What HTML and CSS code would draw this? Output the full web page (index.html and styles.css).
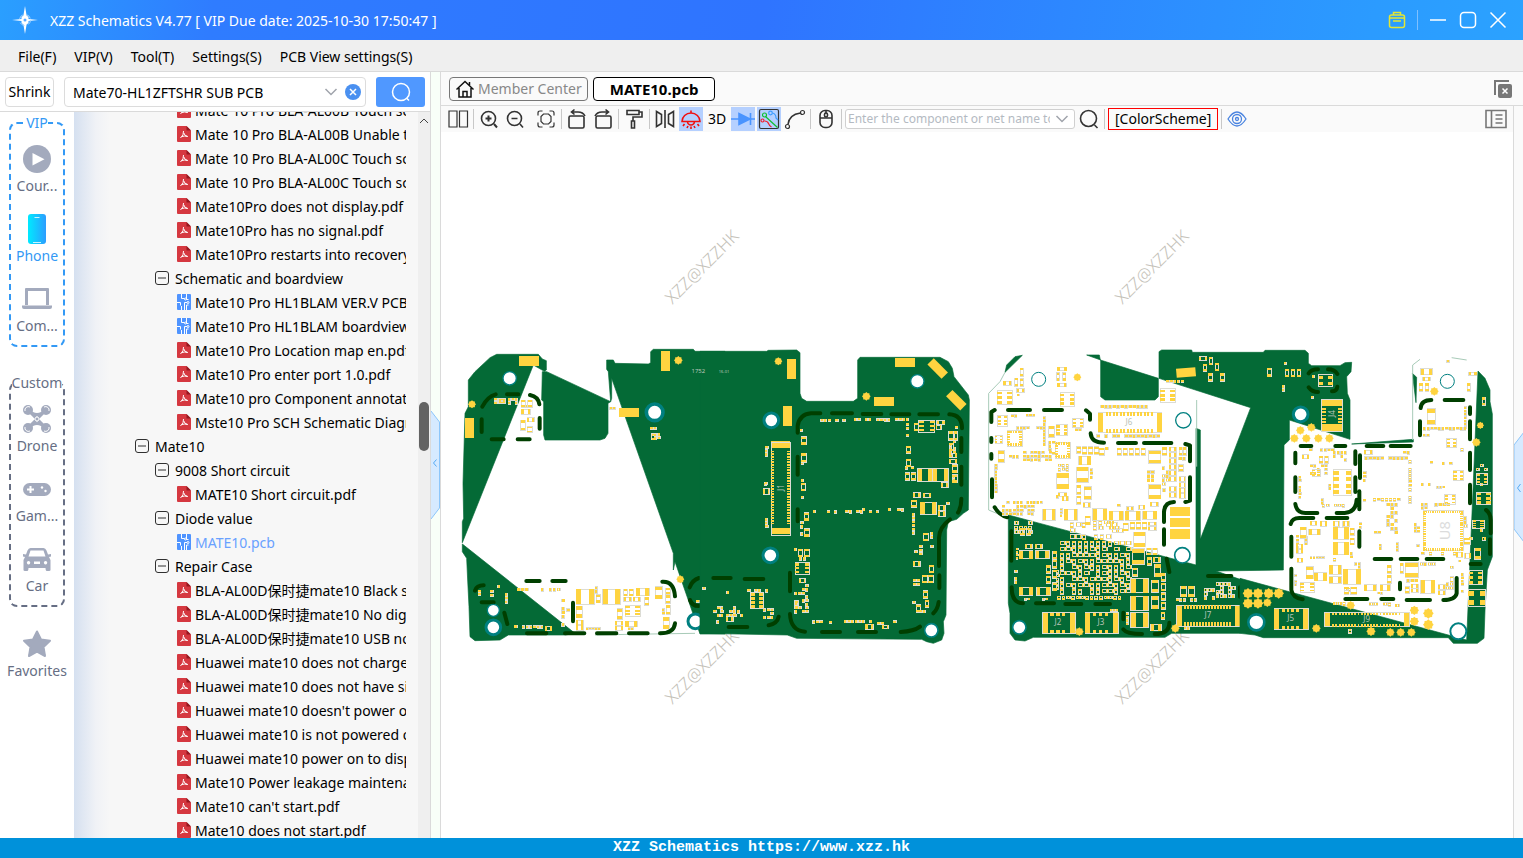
FILE: index.html
```html
<!DOCTYPE html>
<html lang="en">
<head>
    <meta charset="utf-8">
    <title>XZZ Schematics</title>
    <link rel="stylesheet" href="styles.css">
</head>
<body>
    <header class="titlebar">
        <svg class="logo" viewBox="0 0 28 28" aria-hidden="true">
            <path class="star" d="M14 0l1.600 9.500L17.500 11v2l9.500 1-9.500 1v2l-1.900 1.500L14 28l-1.600-9.500L10.500 17v-2L1 14l9.500-1v-2l1.900-1.500z"/>
            <circle class="ring" cx="14" cy="14" r="5.500"/>
            <circle class="core" cx="14" cy="14" r="1.500"/>
        </svg>
        <span class="app-name">XZZ Schematics V4.77 [ VIP Due date: 2025-10-30 17:50:47 ]</span>
        <div class="window-buttons">
            <button aria-label="Toolbox"><svg class="toolbox" viewBox="0 0 20 20"><rect x="2.500" y="5" width="15" height="12.500" rx="2"/><path d="M6.500 5V2.500h7V5M2.500 8h15M6 11h8"/></svg></button>
            <span class="divider"></span>
            <button aria-label="Minimize"><svg viewBox="0 0 20 20"><path d="M2 10h16"/></svg></button>
            <button aria-label="Maximize"><svg viewBox="0 0 20 20"><rect x="2.500" y="2.500" width="15" height="15" rx="3.500"/></svg></button>
            <button aria-label="Close"><svg viewBox="0 0 20 20"><path d="M2.500 2.500l15 15M17.500 2.500l-15 15"/></svg></button>
        </div>
    </header>

    <nav class="menubar">
        <button>File(F)</button>
        <button>VIP(V)</button>
        <button>Tool(T)</button>
        <button>Settings(S)</button>
        <button>PCB View settings(S)</button>
    </nav>

    <main class="workspace">
        <section class="left">
            <form class="search">
                <button type="button" class="shrink">Shrink</button>
                <div class="search-box">
                    <input type="text" aria-label="Search files" value="Mate70-HL1ZFTSHR SUB PCB">
                    <button type="button" aria-label="History"><svg class="chevron" viewBox="0 0 16 16"><path d="M2.500 5l5.500 5.500L13.500 5"/></svg></button>
                    <button type="button" aria-label="Clear"><svg class="clear" viewBox="0 0 16 16"><circle cx="8" cy="8" r="8"/><path d="M5 5l6 6M11 5l-6 6"/></svg></button>
                </div>
                <button type="button" class="go" aria-label="Search"><svg viewBox="0 0 24 24"><circle cx="12" cy="12" r="8.500"/><path d="M17.500 18l2.500 2.500"/></svg></button>
            </form>
            <div class="browser">
                <aside class="categories">
                    <fieldset class="group group-vip">
                        <legend>VIP</legend>
                        <button class="cat"><svg viewBox="0 0 30 30"><circle cx="15" cy="15" r="14"/><path class="hole" d="M10.500 9v12.500L22.500 15.200z"/></svg><span>Cour...</span></button>
                        <button class="cat active"><svg viewBox="0 0 30 30"><defs><linearGradient id="ph"><stop offset="0" stop-color="#00eaff"/><stop offset="1" stop-color="#2c9dff"/></linearGradient></defs><rect x="6" y="0" width="18" height="30" rx="3" fill="url(#ph)"/><path d="M12.500 3.500h5M11 28.500h8" stroke="#c9f5ff" stroke-width="1.200"/></svg><span>Phone</span></button>
                        <button class="cat"><svg viewBox="0 0 30 30"><path fill-rule="evenodd" d="M4 4h22q1 0 1 1v17H3V5q0-1 1-1zM6 7v14h18V7zM0 21.500h30V23q0 2-2 2H2q-2 0-2-2z"/></svg><span>Com...</span></button>
                    </fieldset>
                    <fieldset class="group">
                        <legend>Custom</legend>
                        <button class="cat"><svg viewBox="0 0 30 30"><circle cx="6" cy="6" r="5"/><circle cx="24" cy="6" r="5"/><circle cx="6" cy="24" r="5"/><circle cx="24" cy="24" r="5"/><path class="arm" d="M6 6q9 9 18 0M6 24q9-9 18 0M8 8l14 14M22 8L8 22"/><circle class="hub" cx="15" cy="15" r="2"/><path class="prop" d="M3 7a3.500 3.500 0 0 1 5-4M27 7a3.500 3.500 0 0 0-5-4M3 23a3.500 3.500 0 0 0 5 4M27 23a3.500 3.500 0 0 1-5 4"/></svg><span>Drone</span></button>
                        <button class="cat"><svg viewBox="0 0 30 30"><rect x="1" y="9" width="28" height="13" rx="6.500"/><path class="mark" d="M5 15.500h7M8.500 12v7"/><circle class="hole" cx="20" cy="13.500" r="1.200"/><circle class="hole" cx="23.500" cy="17" r="1.200"/></svg><span>Gam...</span></button>
                        <button class="cat"><svg viewBox="0 0 30 30"><path fill-rule="evenodd" d="M8.500 4h13q2 0 3 2.500l1.500 4 3-.5v2.500l-2 .5 1.500 3V26q0 1-1.500 1h-2.500q-1 0-1-3h-17q0 3-1 3H3q-1.500 0-1.500-1V16L3 13l-2-.5V10l3 .5 1.500-4Q6.500 4 8.500 4zM8.500 6.500L6.500 12.500h17l-2-6zM6.500 17a1.700 1.700 0 1 0 .1 0zM23.500 17a1.700 1.700 0 1 0 .1 0zM12 17.500v2.500h6v-2.500z"/></svg><span>Car</span></button>
                    </fieldset>
                    <button class="cat favorites"><svg viewBox="0 0 30 30"><path stroke="#a3aabd" stroke-width="2" stroke-linejoin="round" d="M15 2.500l4 8 9 1.300-6.500 6.200 1.500 9-8-4.300L7 27l1.500-9L2 11.800l9-1.300z"/></svg><span>Favorites</span></button>
                </aside>
                <div class="tree">
                    <ul id="files"></ul>
                </div>
                <div class="scrollbar">
                    <svg viewBox="0 0 12 12"><path d="M2 8l4-4 4 4"/></svg>
                    <span class="thumb"></span>
                </div>
            </div>
        </section>

        <div class="splitter">
            <svg viewBox="0 0 9 110"><path class="tab" d="M0 1l8.500 11v86L0 109"/><path class="arrow" d="M5.500 49.500L2.500 53l3 3.500"/></svg>
        </div>

        <section class="viewer">
            <div class="tabs">
                <a href="#home" class="tab-item"><svg viewBox="0 0 20 20"><path d="M1.500 10.500L10 2.500l8.500 8M4 9v9h12V9M8 18v-5.500h4V18M14.500 6V3"/></svg>Member Center</a>
                <a href="#board" class="tab-item current">MATE10.pcb</a>
                <button class="close-all" aria-label="Close all tabs"><svg viewBox="0 0 20 20"><path class="back" d="M2 16V2h14"/><rect x="5" y="5" width="14" height="14" rx="2"/><path class="x" d="M9.500 9.500l5 5M14.500 9.500l-5 5"/></svg></button>
            </div>
            <div class="toolbar">
                <button aria-label="Split view"><svg viewBox="0 0 22 22"><path d="M2 3h8v16H2zM12.500 3h8v16h-8z" class="thin"/></svg></button>
                <span class="sep"></span>
                <button aria-label="Zoom in"><svg viewBox="0 0 22 22"><circle cx="10.500" cy="10.500" r="7"/><path d="M16 16l3 3.500M7.500 10.500h6M10.500 7.500v6" class="bold"/></svg></button>
                <button aria-label="Zoom out"><svg viewBox="0 0 22 22"><circle cx="10.500" cy="10.500" r="7"/><path d="M16 16l3 3.500M7.500 10.500h6"/></svg></button>
                <span class="sep blank"></span>
                <button aria-label="Fit"><svg viewBox="0 0 22 22"><path class="thin" d="M3 7.500V5q0-2 2-2h2.500M14.500 3H17q2 0 2 2v2.500M19 14.500V17q0 2-2 2h-2.500M7.500 19H5q-2 0-2-2v-2.500"/><path class="thin" d="M8.500 6h5l2.500 2.500v5L13.500 16h-5L6 13.500v-5z"/></svg></button>
                <span class="sep"></span>
                <button aria-label="Rotate left"><svg viewBox="0 0 22 22"><rect x="3" y="8" width="15" height="12" rx="1.500"/><path d="M5.500 4H12q5 0 7 4M8.500 1.500L5.500 4l3 2.500"/></svg></button>
                <button aria-label="Rotate right"><svg viewBox="0 0 22 22"><rect x="4" y="8" width="15" height="12" rx="1.500"/><path d="M16.500 4H10q-5 0-7 4M13.500 1.500l3 2.500-3 2.500"/></svg></button>
                <span class="sep"></span>
                <button aria-label="Paint"><svg viewBox="0 0 22 22"><path d="M4 2.500h12v4H4zM16 4h3v5h-9v4M8.500 13h3v7h-3z"/></svg></button>
                <span class="sep"></span>
                <button aria-label="Mirror"><svg viewBox="0 0 22 22"><path d="M2.500 3.500l5 3v9l-5 3zM19.500 3.500l-5 3v9l5 3zM11 2v18"/></svg></button>
                <button class="on" aria-label="Lamp"><svg class="lamp" viewBox="0 0 22 22"><path d="M2 13.500a9 8.500 0 0 1 18 0zM11 5V2.500M7.500 13.500a3.500 3.500 0 0 0 7 0M4.500 16L3 18M17.500 16l1.500 2M8 18l-1 2M14 18l1 2M11 18.500V21"/></svg></button>
                <button class="text3d">3D</button>
                <button class="on" aria-label="Diode"><svg class="diode" viewBox="0 0 24 22"><path d="M0 11h24M19.500 5v12"/><path class="fill" d="M8 5.500v11l11-5.500z"/></svg></button>
                <button class="on" aria-label="Nets"><svg class="nets" viewBox="0 0 22 22"><rect x="1.500" y="1.500" width="19" height="19" rx="1.500"/><path class="green" d="M8 9l11.500 10.500"/><circle class="green" cx="6.500" cy="7" r="2"/><path class="red" d="M6.500 13q3 0 4 2.500t3 3.500"/><circle class="red" cx="4.500" cy="12.500" r="1.500"/><path class="blue" d="M14.500 5q3.500 1 3.500 5l2 2"/><circle class="blue" cx="12.500" cy="5" r="1.800"/></svg></button>
                <button aria-label="Curve"><svg viewBox="0 0 22 22"><path d="M4 16.500Q5 6.500 16.500 5"/><circle class="thin" cx="3.500" cy="18.500" r="2"/><circle class="thin" cx="18.500" cy="4.500" r="2"/></svg></button>
                <span class="sep"></span>
                <button aria-label="Mouse"><svg viewBox="0 0 22 22"><rect x="5" y="2.500" width="12" height="17" rx="5"/><path d="M5 10h12M11 2.500v3"/><rect x="9.500" y="5" width="3" height="4" rx="1.500"/></svg></button>
                <span class="sep"></span>
                <div class="net-box">
                    <input type="text" aria-label="Component or net name" placeholder="Enter the component or net name to search">
                    <svg class="chevron" viewBox="0 0 16 16"><path d="M2.500 5l5.500 5.500L13.500 5"/></svg>
                </div>
                <button aria-label="Find"><svg viewBox="0 0 22 22"><circle cx="10.500" cy="10.500" r="8"/><path d="M16.500 17l3 3"/></svg></button>
                <span class="sep"></span>
                <button class="scheme">[ColorScheme]</button>
                <span class="sep"></span>
                <button aria-label="Visibility"><svg class="eye" viewBox="0 0 22 22"><path d="M2 11q9-14 18 0-9 14-18 0z"/><circle cx="11" cy="11" r="4.500"/><circle cx="11" cy="11" r="1.500"/></svg></button>
                <button class="panel-toggle" aria-label="Side panel"><svg viewBox="0 0 22 22"><path d="M1 2.500h20v17H1zM6.500 2.500v17M10.500 7h7M10.500 11h7M10.500 15h7"/></svg></button>
            </div>
            <div class="stage">
                <svg class="board" viewBox="0 0 3216 2118" role="img" aria-label="MATE10 board view">
                    <g class="watermark">
                        <text transform="translate(786 408) rotate(-45)">XZZ@XZZHK</text>
                        <text transform="translate(2136 408) rotate(-45)">XZZ@XZZHK</text>
                        <text transform="translate(786 1608) rotate(-45)">XZZ@XZZHK</text>
                        <text transform="translate(2136 1608) rotate(-45)">XZZ@XZZHK</text>
                    </g>
                    <g id="a" transform="translate(42 624)">
                        <path class="pcb" d="M22 608V545l4-10-2-105 6-210 10-20v-80l20-25 45-42 20-10h125l12 14 12 5v28l-6 4-33-19zM262 95h13l192 90-8 5v90l-9 15-15 5H270l-4-15V185l-6-5zM455 60h20l5 10 100 2 7-4V35l8-7h120l5 6h90v848h-75l-75-217-5 25v-50L470 115v60l-3 10-7-90-5-7zM22 612l338 268-30 5H160l-25 15-75 2-15-12-3-90-4-80-3-65-13-20z"/>
                        <path class="rim" d="M420 885l100-2 200-3"/>
                    </g>
                    <g id="b" transform="translate(777 624)">
                        <path class="pcb" d="M0 34h200l5-3 85-1 10 8v122l5 15 15 9h140l13-9V60l7-8h240l25 13 12 20 5 25 43 55 3 15-3 330-15 10-20 18-25 7-5 25-2 255-8 20 2 35-7 20-25 10-20-5-15-7-375-3-28-10L0 880z"/>
                    </g>
                    <g id="c" transform="translate(1617 624)">
                        <path class="pcb" d="M75 97l5-22 25-25 22-4zM320 45h38l3 15 174 55v55l-10 10H375l-13-10V60zM537 115V35l8-5h90l2 7h213l5-6h120l10 9v30l10 7h85l15-9 20-1-2 28-13 15 2 50 8 20v118l-182-58v60l-16 15-2 375-202 3 72 25v162H575l-20 12H160l-25 11-30-3-15-20v-60l-5-30V525l75 20 488 130V265l13 5v328l151-395z"/>
                        <path class="rim" d="M75 97L60 125 26 160v350l60 25M650 180v200"/>
                    </g>
                    <g id="d" transform="translate(2397 624)">
                        <path class="pcb" d="M0 715l680 185 34-807 21 22 15 35v35l7 37v428l-15 40-7 120-3 85-20 15h-72l-15-17H70l-25-8-45-5zM517 100l13 12-2 76zM335 312l185-14v8z"/>
                        <path class="rim" d="M518 300V75l22-17M635 53l45 7"/>
                    </g>
                </svg>
            </div>
            <div class="rail">
                <svg viewBox="0 0 10 110"><path class="tab" d="M10 0L0 13v84l10 13"/><path class="arrow" d="M6.500 52l-3 4 3 4"/></svg>
            </div>
        </section>
    </main>

    <footer class="statusbar">XZZ Schematics https://www.xzz.hk</footer>
    <script src="app.js"></script>
</body>
</html>
```
FILE: styles.css
```css
* { box-sizing: border-box; }
body { margin: 0; height: 100vh; display: flex; flex-direction: column; overflow: hidden; font: 14px/20px "Noto Sans", "Noto Sans CJK SC", sans-serif; color: #000; background: #fff; }
button, input { font: inherit; color: inherit; border: 0; padding: 0; margin: 0; background: none; }
svg { fill: none; flex: none; }

.titlebar { height: 40px; flex: none; display: flex; align-items: center; padding: 0 15px 0 11px; color: #fff; background: linear-gradient(100deg, #2a9fff 0, #2f7cff 14%, #2f74ff 50%, #2b9bff 90%, #2ba2ff 100%); }
.logo { width: 28px; height: 28px; margin-right: 11px; }
.logo .star { fill: #fff; }
.logo .ring { stroke: #a9d6ff; stroke-dasharray: 5 4; }
.logo .core { fill: #58a8ff; }
.app-name { padding-top: 2px; }
.window-buttons { margin-left: auto; display: flex; align-items: center; gap: 10px; }
.window-buttons button, .window-buttons svg { display: block; width: 20px; height: 20px; }
.window-buttons svg { stroke: #fff; stroke-width: 1.500; }
.window-buttons .toolbox { stroke: #e3e635; }
.window-buttons .divider { width: 1px; height: 20px; background: #7fc0ff; }

.menubar { height: 32px; flex: none; display: flex; align-items: center; gap: 18px; padding: 2px 18px 0; background: #efefef; border-bottom: 1px solid #dadada; }

.workspace { flex: 1; min-height: 0; display: flex; }
.left { width: 431px; flex: none; display: flex; flex-direction: column; border-right: 1px solid #dadada; }
.search { height: 40px; flex: none; display: flex; align-items: center; padding: 0 5px; border-bottom: 1px solid #dadada; }
.shrink { width: 49px; height: 30px; padding-top: 1px; border: 1px solid #dcdcdc; border-radius: 4px; }
.search-box { flex: 1; height: 30px; margin: 0 10px; display: flex; align-items: center; gap: 6px; padding: 0 4px 0 8px; border: 1px solid #dcdcdc; border-radius: 4px; }
.search-box input { flex: 1; min-width: 0; padding-top: 2px; }
.search-box svg { display: block; width: 16px; height: 16px; }
.chevron { stroke: #a0a4ac; stroke-width: 1.500; }
.clear circle { fill: #4a90f0; }
.clear path { stroke: #fff; stroke-width: 1.500; }
.go { width: 49px; height: 30px; border-radius: 3px; background: #5098ff; }
.go svg { width: 24px; height: 24px; display: block; margin: auto; stroke: #fff; stroke-width: 1.500; }

.browser { flex: 1; min-height: 0; display: flex; }
.categories { width: 74px; flex: none; display: flex; flex-direction: column; align-items: center; padding-top: 1px; color: #666e84; overflow: hidden; }
.group { width: 56px; min-width: 0; margin: 0 0 26px; padding: 7px 0 9px; display: flex; flex-direction: column; align-items: center; gap: 14px; border: 2px dashed #666e84; border-radius: 8px; }
.group legend { padding: 0; margin: 0 auto; line-height: 20px; }
.group-vip { border-color: #3399f5; }
.group-vip legend, .cat.active { color: #3399f5; }
.cat { display: flex; flex-direction: column; align-items: center; }
.cat svg { width: 30px; height: 30px; margin: 4px 0 2px; fill: #a3aabd; }
.cat .hole { fill: #fff; }
.cat .mark { stroke: #fff; stroke-width: 2; }
.cat .arm { stroke: #a3aabd; stroke-width: 3; fill: none; }
.cat .hub, .cat .prop { stroke: #fff; fill: none; }
.favorites { margin-top: -8px; }

.tree { flex: 1; min-width: 0; overflow: hidden; padding-right: 12px; background: linear-gradient(90deg, #d5e0f0 0, #f0f2f6 22px, #f7f7f7 36px); }
.tree ul { list-style: none; margin: -14px 0 0; padding: 0; overflow: hidden; }
.tree li { height: 24px; display: flex; align-items: center; gap: 3px; white-space: nowrap; }
.tree li svg { width: 16px; height: 16px; }
.tree li span { padding-top: 2px; }
.tree .level1 { padding-left: 60px; }
.tree .level2 { padding-left: 80px; }
.tree .level3 { padding-left: 102px; }
.tree .level1, .tree .level2 { gap: 5px; }
.tree .selected { color: #69a1ff; }
.minus { stroke: #303030; }
.pdf .page { fill: #d53840; }
.pdf .fold { fill: #951820; }
.pdf .sign { stroke: #fff; }
.pcbfile .page { fill: #4f94ff; }
.pcbfile .sign { stroke: #fff; }

.scrollbar { width: 12px; flex: none; background: #efefef; position: relative; }
.scrollbar svg { display: block; width: 12px; height: 12px; margin-top: 3px; stroke: #444; }
.thumb { position: absolute; left: 1px; right: 1px; top: 40%; height: 49px; border-radius: 5px; background: #636363; }

.splitter { width: 9px; flex: none; display: flex; align-items: center; padding-top: 20px; background: #f8fff8; }
.splitter svg { width: 9px; height: 110px; }
.tab { fill: #d6eaff; stroke: #8cc6fa; }
.arrow { stroke: #55aaf5; }

.viewer { flex: 1; min-width: 0; display: grid; grid-template: 34px 26px 1fr / 1fr 10px; border-left: 1px solid #dadada; }
.tabs { grid-column: 1 / 3; display: flex; align-items: center; gap: 5px; padding: 0 10px 0 8px; background: #fafafa; border-bottom: 1px solid #dadada; }
.tab-item { height: 24px; display: flex; align-items: center; gap: 3px; padding: 0 5px; border: 1px solid #777; border-radius: 4px; color: #888; text-decoration: none; }
.tab-item svg { width: 20px; height: 20px; stroke: #111; stroke-width: 1.500; }
.tab-item.current { padding: 0 16px; border-color: #000; color: #000; font-size: 15px; font-weight: bold; background: #fff; }
.close-all { margin-left: auto; }
.close-all svg { display: block; width: 20px; height: 20px; }
.close-all .back { stroke: #777; stroke-width: 2; }
.close-all rect { fill: #777; }
.close-all .x { stroke: #fff; stroke-width: 1.500; }

.toolbar { display: flex; align-items: center; gap: 2px; padding: 0 5px; background: #fafafa; min-width: 0; }
.toolbar button { min-width: 24px; height: 24px; display: flex; align-items: center; justify-content: center; }
.toolbar button svg { width: 22px; height: 22px; stroke: #333; stroke-width: 1.600; }
.toolbar .sep { width: 1px; height: 20px; margin: 0 1px; background: #c8c8c8; }
.toolbar .blank { background: none; }
.toolbar .on { background: #b5d0ff; }
.toolbar .thin { stroke-width: 1.200; }
.toolbar .bold { stroke-width: 2; }
.toolbar button .lamp { stroke: #f01010; }
.toolbar button .diode { width: 24px; stroke: #4a94ff; }
.diode .fill { fill: #4a94ff; }
.toolbar button .nets { stroke-width: 1.200; }
.nets .green { stroke: #10c030; }
.nets .red { stroke: #f02030; }
.nets .blue { stroke: #3c9cff; }
.toolbar button .eye { stroke: #4a84e0; stroke-width: 1.300; }
.net-box { width: 230px; height: 20px; display: flex; align-items: center; padding: 0 4px 0 2px; border: 1px solid #d0d0d0; border-radius: 3px; background: #fff; }
.net-box input { flex: 1; min-width: 0; margin-right: 4px; font-size: 12px; }
.net-box input::placeholder { color: #b4bac2; }
.net-box .chevron { width: 16px; height: 16px; }
.toolbar .scheme { height: 22px; padding: 0 6px; border: 1px solid #f00; }
.toolbar .panel-toggle { margin-left: auto; }
.toolbar button.panel-toggle svg { stroke: #777; }

.stage { grid-row: 3; min-height: 0; background: #fff; }
.board { display: block; width: 100%; height: 100%; }
.rail { grid-row: 2 / 4; grid-column: 2; display: flex; align-items: center; padding-top: 30px; border-left: 1px solid #dadada; background: #fafafa; }
.rail svg { width: 10px; height: 110px; }

.watermark text { font-size: 51px; font-weight: 300; fill: #c4c1b8; text-anchor: middle; dominant-baseline: middle; }
.pcb { fill: #046a36; stroke: #046a36; stroke-width: 2; }
.rim { stroke: #a8cbb8; stroke-width: 3; }
.pad { fill: #ffd440; }
.outline { fill: none; stroke: #dcdcd4; stroke-width: 3; }
.shield { stroke: #003f00; stroke-width: 12; stroke-linecap: round; stroke-linejoin: round; }
.drill { fill: #fff; stroke: #008080; }
.ref { font-size: 24px; fill: #b8c4b8; text-anchor: middle; }
.ref.large { font-size: 44px; fill: #dcdcdc; }
.ref.small { font-size: 18px; }
.ref.tiny { font-size: 12px; }

.statusbar { height: 20px; flex: none; background: #0091da; color: #fff; text-align: center; font: bold 15px/20px "Liberation Mono", monospace; }
```
FILE: app.js
```js
// file tree: [level, type, name]
const files = [
    [3, 'pdf', 'Mate 10 Pro BLA-AL00B Touch screen.pdf'],
    [3, 'pdf', 'Mate 10 Pro BLA-AL00B Unable to start.pdf'],
    [3, 'pdf', 'Mate 10 Pro BLA-AL00C Touch screen.pdf'],
    [3, 'pdf', 'Mate 10 Pro BLA-AL00C Touch screen 2.pdf'],
    [3, 'pdf', 'Mate10Pro does not display.pdf'],
    [3, 'pdf', 'Mate10Pro has no signal.pdf'],
    [3, 'pdf', 'Mate10Pro restarts into recovery.pdf'],
    [2, 'dir', 'Schematic and boardview'],
    [3, 'pcb', 'Mate10 Pro HL1BLAM VER.V PCB.pcb'],
    [3, 'pcb', 'Mate10 Pro HL1BLAM boardview.pcb'],
    [3, 'pdf', 'Mate10 Pro Location map en.pdf'],
    [3, 'pdf', 'Mate10 Pro enter port 1.0.pdf'],
    [3, 'pdf', 'Mate10 pro Component annotation.pdf'],
    [3, 'pdf', 'Mste10 Pro SCH Schematic Diagram.pdf'],
    [1, 'dir', 'Mate10'],
    [2, 'dir', '9008 Short circuit'],
    [3, 'pdf', 'MATE10 Short circuit.pdf'],
    [2, 'dir', 'Diode value'],
    [3, 'pcb', 'MATE10.pcb'],
    [2, 'dir', 'Repair Case'],
    [3, 'pdf', 'BLA-AL00D保时捷mate10 Black screen.pdf'],
    [3, 'pdf', 'BLA-AL00D保时捷mate10 No digits.pdf'],
    [3, 'pdf', 'BLA-AL00D保时捷mate10 USB no.pdf'],
    [3, 'pdf', 'Huawei mate10 does not charge.pdf'],
    [3, 'pdf', 'Huawei mate10 does not have signal.pdf'],
    [3, 'pdf', "Huawei mate10 doesn't power on.pdf"],
    [3, 'pdf', 'Huawei mate10 is not powered on.pdf'],
    [3, 'pdf', 'Huawei mate10 power on to display.pdf'],
    [3, 'pdf', 'Mate10 Power leakage maintenance.pdf'],
    [3, 'pdf', "Mate10 can't start.pdf"],
    [3, 'pdf', 'Mate10 does not start.pdf']
];

const icons = {
    dir: '<svg class="minus" viewBox="0 0 16 16"><rect x="1.5" y="1.5" width="13" height="13" rx="2.5"/><path d="M4 8h8"/></svg>',
    pdf: '<svg class="pdf" viewBox="0 0 16 16"><path class="page" d="M2 0h8.500L15 4.500V15q0 1-1 1H2q-1 0-1-1V1q0-1 1-1z"/><path class="fold" d="M10.500 0v4.500H15z"/><path class="sign" d="M7.500 5q.5 4-3 7M7.800 7q.7 3 4 3.500M6 10.500q2.500-1 5.500 0"/></svg>',
    pcb: '<svg class="pcbfile" viewBox="0 0 16 16"><rect class="page" x="1" width="14" height="16" rx="1"/><path class="sign" d="M5.500 0v4.500h3M10.500 0v5.500h2M1 8.500h3.500v3M5.500 16v-4M8.500 16V8.500h2.500M10.500 16v-5h2"/><circle class="sign" cx="9.500" cy="5" r="1"/><circle class="sign" cx="12" cy="8.500" r="1"/></svg>'
};

document.getElementById('files').innerHTML = files.map(([level, type, name]) =>
    `<li class="level${level}${name === 'MATE10.pcb' ? ' selected' : ''}">${icons[type]}<span>${name}</span></li>`
).join('');

// board parts, grouped by board section
// pads: x y w h | chips: x y w h | dots: x y r | drills: x y r ring
// shield: path data | fields: x y w h cell fill | ics: x y w h pins | refs: x y text
const sections = {
    a: {
        pads: '192 48 60 30,29 234 28 60,618 33 27 60,492 204 60 27',
        dots: '51 193 12,670 61 13,676 718 12',
        drills: '164 115 20 4,599 217 25 11,115 811 18 4,115 862 22 9,721 844 22 9',
        shield: 'M82 200q15-30 40-37M156 163h34M225 165q25 5 28 28M80 238v38M254 234v32M110 298h36M188 298h36M60 752q5-16 26-16M80 787h36M148 818l9 34M214 723h40M292 723h40M354 788v56M622 725q35-2 38 44M660 850q-3 30-45 30M216 880h58M330 880h58M426 880h58M522 880h56M704 742q8-22 28-28M772 714h40M705 780q6 18 26 18',
        chips: '131 176 20 14,198 208 28 14,197 241 14 30,198 180 12 22,218 181 14 20,217 233 20 12,217 260 14 16,364 748 54 44,443 748 53 44,544 745 38 22,601 740 20 36,364 799 18 34,364 840 20 14,364 856 20 14,486 806 16 32,481 844 22 12,481 858 22 12,511 844 36 16,625 832 17 34,423 764 12 24,506 747 11 20,523 747 11 20,506 772 22 12,534 772 22 12,569 772 12 24,632 744 14 18,632 766 14 24,633 796 12 26,270 858 20 14,590 281 14 18',
        ics: '511 796 44 32 3',
        fields: '118 175 30 16 10 .9,160 175 28 16 10 .9,187 745 36 16 12 .9,246 745 68 16 12 .6,320 778 16 86 12 .7,335 806 12 24 12 .9,202 857 66 14 11 1,178 856 12 12 12 1,70 750 10 24 10 .9,106 740 12 32 11 .9,150 760 16 36 11 .9,128 736 10 10 10 1,394 863 84 8 9 .6,511 863 26 8 9 .9,421 740 14 22 11 .8,576 262 32 12 10 .6,588 280 28 18 10 .9,464 202 16 14 10 .9,742 740 12 16 12 1,724 780 14 12 12 1,774 796 34 50 12 .8,622 796 10 26 10 .8,214 196 20 8 9 .9'
    },
    b: {
        pads: '261 57 27 60,249 198 27 60,585 54 60 27,522 171 60 27,214 304 57 20,214 564 57 18',
        tilted: '683 72 60 27 45,739 167 60 27 45',
        dots: '235 64 12,499 169 13',
        drills: '214 241 22 9,211 646 22 9,652 124 20 4,694 871 20 5',
        shield: 'M293 278v-20q5-35 40-38h28M396 220h60M488 222h56M574 223h54M658 223h56M748 223q38 2 38 42M784 294v42M784 380v54M784 476q0 26-10 42M750 538q-33 25-33 55v85M718 706v38M716 786q-3 22-16 34M293 350v54M293 508v36M270 698v56M270 822q2 50 45 53M366 876h54M474 876h54M602 876q40-2 58-16M40 714h52M134 717h56M86 861h56M206 856q26-5 30-26',
        chips: '304 290 15 24,304 340 15 26,303 430 13 22,313 518 13 24,313 566 15 24,294 628 12 22,313 628 15 22,298 716 18 12,618 318 14 22,618 358 14 22,616 398 12 22,634 398 13 22,653 386 44 38,699 386 46 38,724 428 20 14,757 374 15 24,757 404 14 24,748 340 22 12,748 358 22 12,746 274 13 26,762 274 10 26,748 310 12 22,640 458 20 14,670 460 22 12,634 480 16 22,661 487 48 36,715 496 20 14,715 514 20 14,670 580 14 22,640 664 20 14,687 676 14 22,667 706 14 22,685 706 14 22,670 752 13 22,649 794 13 22,676 780 10 22,496 852 24 16,547 856 18 10,710 242 24 10,708 256 16 12,642 250 12 22,79 830 20 14,284 782 10 24,190 446 18 16',
        ics: '656 240 48 36 3,285 668 42 34 3,152 757 38 48 4',
        fields: '362 237 74 8 11 .8,462 234 60 10 11 .9,530 236 50 10 11 .9,586 234 50 12 11 .9,618 250 12 40 11 .9,300 268 12 12 10 1,303 366 12 8 10 1,303 418 14 8 10 1,303 468 14 8 10 1,340 510 16 8 11 1,382 512 26 8 10 .8,436 511 52 8 11 .9,488 504 14 16 11 .9,508 512 34 8 10 .8,564 504 14 16 11 .9,592 506 28 10 11 .9,302 545 14 50 11 .8,282 625 10 14 10 1,298 652 28 10 11 .9,284 734 42 92 11 .72,338 842 32 12 11 .9,376 844 18 16 11 .8,432 840 90 8 11 .9,532 846 24 8 11 .8,580 842 12 8 11 1,636 520 12 72 11 .8,692 576 14 28 11 .9,658 616 16 34 11 .8,692 616 10 12 10 1,644 632 10 10 10 1,640 718 26 28 11 .8,638 784 12 30 11 .8,658 810 22 14 11 .8,756 384 14 56 11 .3,748 300 24 70 11 .5,740 486 10 18 10 .9,766 258 12 12 10 1,634 380 12 10 10 1,616 380 12 10 10 1,196 318 14 34 11 .9,192 428 14 10 10 .8,196 534 12 36 11 .9,196 426 10 12 10 1,142 748 66 8 11 .8,40 800 32 36 11 .7,78 800 60 36 11 .8,190 806 30 32 11 .7,80 754 10 10 10 1,8 742 10 14 10 1,50 842 12 8 10 1'
    },
    c: {
        pads: '570 501 60 27,570 534 60 27,570 567 60 29',
        tilted: '589 84 58 27 -5',
        dots: '292 112 12,298 875 13,586 865 13,805 760 16,834 760 16,805 790 16,834 790 16',
        drills: '176 118 21 3,610 241 23 4,607 646 23 5,118 862 20 5,828 847 24 8',
        shield: 'M34 246v-30l10-6M84 210h66M192 210h54M318 211l12 10v18M332 280q2 28 40 28M414 309h54M492 309h82M616 312l14 4v48M630 412v70l-14 4M582 486q-28 0-30 30v30M552 568v46M34 294v12M34 342v14M36 418v54M44 502q14 24 38 30M94 574v88M95 742q0 48 34 48M168 790h54M256 792h48M346 792h44M560 656l8 40M430 818v20M430 868q10 14 56 14M524 882q44 0 44-34M684 708h70M780 742v28',
        chips: '120 84 10 24,230 98 8 24,248 98 9 24,232 82 28 10,232 130 26 10,70 124 24 12,104 114 9 24,120 116 10 22,110 146 22 10,296 348 36 26,290 382 34 44,230 400 36 46,312 440 22 38,290 436 12 26,290 468 12 24,188 508 38 32,252 508 40 32,310 488 20 14,338 506 42 34,388 514 42 26,436 514 44 26,488 514 42 24,506 332 36 38,506 434 36 42,316 528 14 26,206 258 16 34,55 332 18 34,412 324 12 22,430 324 12 22,448 324 12 22,466 324 12 22,484 324 12 22,306 320 14 22,324 320 14 22,342 320 14 22,358 324 14 22,290 320 12 20,546 322 14 24,568 322 20 12,568 338 20 14,568 356 20 14,568 374 20 14,568 392 20 14,568 410 20 14,568 440 20 14,568 458 20 14,598 322 8 24,610 322 8 24,596 374 14 20,598 410 18 14,598 428 18 14,598 444 18 14,598 460 18 14,461 576 34 44,456 626 36 46,452 716 52 42,452 768 52 42,452 818 52 44,515 720 20 36,515 768 20 38,524 672 18 38,512 852 32 20,458 684 14 24,118 632 40 24,167 632 40 22,118 742 40 24,170 742 40 24,198 676 12 24,198 708 12 22,218 634 12 24,218 660 12 24,218 690 12 24,218 728 12 24,120 564 14 22,140 564 12 22,136 612 20 12,166 612 20 12,234 458 26 10,246 468 18 14,658 50 22 10,688 52 8 22,670 72 10 22,706 70 10 22,684 100 13 24,720 100 13 24,602 738 16 32,624 738 18 32,430 550 14 22,450 546 14 22,468 546 14 22,486 546 14 22,504 546 24 10,504 560 24 10,500 624 14 20,518 624 14 20,544 700 12 24,544 730 12 22,544 758 12 22,544 786 12 22,544 816 10 22,502 652 12 24,520 652 20 14,510 486 24 12,476 496 18 12,440 500 20 10',
        ics: '52 152 44 42 3,240 158 42 40 3,541 146 44 40 3,53 226 28 32 3,278 234 32 28 3,228 254 34 32 3,46 286 20 24 3,82 272 44 46 6,226 306 44 48 6',
        plugs: '355 216 190 62 14,590 795 190 64 16,188 818 98 62 3,316 818 98 62 3',
        refs: '447 256 J6,684 834 J7,234 856 J2,363 856 J3',
        fields: '84 224 30 14 10 .6,138 222 30 12 10 .7,190 230 14 90 10 .8,100 260 90 10 10 .7,130 334 90 34 11 .85,76 346 50 16 11 .8,44 372 14 110 10 .8,80 484 106 12 10 .8,66 496 96 30 11 .75,286 266 28 12 10 .6,206 304 26 50 11 .7,350 196 160 16 12 .8,350 284 196 14 12 .85,376 322 40 20 12 .5,502 392 30 34 12 .8,546 380 20 60 12 .6,548 446 14 18 12 1,234 372 32 24 12 .8,228 466 16 16 12 1,104 544 60 40 14 .6,104 690 10 50 11 .8,134 774 76 8 9 .6,240 604 210 170 18 .93,270 548 160 60 18 .6,340 542 84 40 16 .9,232 768 200 14 14 1,228 690 16 60 12 .9,548 120 66 14 11 .7,588 776 66 10 11 .7,672 746 50 36 12 .7,708 728 60 50 12 .7,438 818 10 44 10 .8,390 808 26 8 9 .9,612 862 20 12 10 1,400 492 30 14 12 .8,330 386 12 40 11 .8,52 200 14 14 10 0,240 506 8 30 9 .9,108 624 8 34 9 .9,596 352 24 14 12 .9,112 162 8 14 9 1'
    },
    d: {
        pads: '244 179 62 18,244 252 62 20',
        dots: '181 271 13,214 262 13,163 295 13,199 295 13,235 295 13,268 295 13,583 154 13,721 256 11,709 307 13,24 760 16,54 760 16,86 760 16,116 760 16,24 790 16,54 790 16,82 788 13,229 865 13,332 796 13,393 874 14,451 877 13,482 877 13,514 877 13,523 811 14,565 820 16,523 844 14,565 854 16',
        drills: '182 223 22 9,622 124 21 3,655 874 24 6,49 847 24 8',
        shield: 'M206 100q8-12 28-12M264 88q20 0 28 14M206 142q10 14 28 14M276 154q14 0 16-14M182 318h32M286 318h30M380 318h50M452 318h60M166 338v32M166 412v44M166 492q4 27 30 27h36M290 519h24q34-2 36-40M346 334v38M346 412v44M360 346v68M358 454v54M152 552q4-18 26-18h42M260 534h62M154 590v60M154 686v64q4 24 34 28M358 574v46M404 657h50M482 657h50M560 657h50M316 777h66M424 777h36M500 780h70M610 780q36 0 40-20v-46M480 728v20M542 204q2-24 32-24M614 180h56M540 244v42M690 202v20M690 244v54M690 338v52M690 434v56M738 510q14 10 14 30v40M750 598v44M692 672h30',
        chips: '82 84 12 26,136 88 10 22,154 88 10 22,172 88 10 22,542 86 34 18,548 112 22 10,538 130 10 24,556 130 10 24,686 97 24 9,682 130 9 24,726 172 10 24,562 206 24 46,280 562 46 36,280 606 46 38,310 688 52 44,222 698 38 24,198 680 22 36,180 562 18 32,206 568 34 16,268 676 36 26,268 710 36 20,210 544 20 12,240 544 20 14,280 544 18 14,308 544 20 14,330 564 12 22,330 594 12 20,372 734 36 18,420 734 30 18,442 676 12 24,442 706 12 24,312 742 14 20,332 742 18 20,496 668 38 44,542 720 42 40,595 734 20 14,595 752 20 12,514 732 20 12,514 746 20 10,704 624 18 34,672 594 18 18,648 636 20 16,674 640 18 14,372 330 24 12,186 344 20 12,238 348 10 22,254 348 10 22,168 612 20 14,168 628 20 12,172 654 16 12,496 740 12 20,480 670 10 30,630 710 10 16',
        ics: '236 103 42 36 2,280 388 54 78 4,620 294 28 28 3,640 392 30 30 3,614 464 32 28 3,216 388 24 20 3,180 728 42 28 3,710 400 32 32 3,710 456 42 38 3,698 540 34 26 4,688 692 38 42 3,684 748 52 52 2,549 512 120 120 18',
        plugs: '254 818 254 42 22,103 806 102 62 4',
        refs: '152 844 J5,380 846 J9',
        fields: '208 326 80 14 11 .7,280 334 48 30 11 .7,176 408 14 66 10 .8,210 374 60 34 11 .6,266 432 10 24 10 1,244 476 10 24 10 1,246 492 74 12 12 .8,180 488 14 16 11 .9,374 350 128 14 12 .9,370 362 10 80 11 .8,468 334 40 16 11 .7,506 360 16 130 12 .8,400 474 90 12 12 .8,440 490 34 96 12 .6,370 574 60 12 11 .8,370 478 14 12 10 1,418 612 10 24 10 1,468 608 10 34 10 .9,550 262 128 16 11 .9,550 282 30 10 10 .7,672 200 10 66 10 .9,548 364 54 12 11 .6,606 366 50 10 11 .5,560 330 20 14 11 .6,544 430 26 8 10 .7,590 438 24 6 9 .8,662 324 16 14 12 .8,544 490 20 16 10 .9,584 490 50 18 12 .9,522 550 16 34 10 .7,530 604 14 24 10 .7,544 636 110 10 12 .7,168 586 10 60 11 .7,194 588 10 34 10 .7,210 650 60 8 9 .8,280 654 24 14 12 .7,344 668 22 16 10 .7,312 744 46 16 12 .4,404 756 30 8 9 .8,164 704 8 36 9 .9,606 678 34 26 12 .7,618 728 20 30 12 .7,500 718 36 14 12 .8,664 700 8 70 10 .8,540 668 46 10 12 .6,280 786 50 18 14 .9,388 788 70 14 14 .8,466 792 14 12 14 1,326 868 56 16 14 .7,708 372 42 22 12 .7,722 430 12 10 10 1,720 525 20 14 10 .6,720 568 12 12 10 1,726 592 14 14 14 1,330 636 12 20 11 1,180 148 18 14 10 .6,216 106 10 14 10 1,214 168 12 8 10 1,126 136 10 16 10 1,132 66 8 14 10 1,620 60 10 12 10 1,688 592 14 18 12 1,672 530 14 40 12 .9,656 660 8 10 9 1,358 548 10 18 10 1'
    }
};

const rect = (x, y, w, h, cls) => `<rect class="${cls}" x="${x}" y="${y}" width="${w}" height="${h}"/>`;
const rows = text => (text || '').split(',').filter(Boolean).map(r => r.split(' ').map(v => isNaN(v) ? v : Number(v)));

// two-pad component, pads sit on the short sides
function chip(x, y, w, h) {
    const p = Math.max(4, Math.round(Math.max(w, h) * 0.28));
    const pads = w > h
        ? rect(x, y, p, h, 'pad') + rect(x + w - p, y, p, h, 'pad')
        : rect(x, y, w, p, 'pad') + rect(x, y + h - p, w, p, 'pad');
    return rect(x, y, w, h, 'outline') + pads;
}

// package with pins: two sides when small, all four when large
function ic(x, y, w, h, pins) {
    let out = rect(x, y, w, h, 'outline');
    const px = w / pins, py = h / pins;
    for (let i = 0; i < pins; i++) {
        const sx = x + i * px + px * 0.2, sy = y + i * py + py * 0.2;
        if (pins <= 4) {
            out += rect(x, sy, w * 0.32, py * 0.6, 'pad') + rect(x + w * 0.68, sy, w * 0.32, py * 0.6, 'pad');
        } else {
            out += rect(sx, y, px * 0.6, 8, 'pad') + rect(sx, y + h - 8, px * 0.6, 8, 'pad');
            out += rect(x, sy, 8, py * 0.6, 'pad') + rect(x + w - 8, sy, 8, py * 0.6, 'pad');
        }
    }
    return out;
}

// connector: end blocks and two pin rows
function plug(x, y, w, h, pins) {
    const end = Math.min(15, w * 0.16), gap = end + 8;
    let out = rect(x, y, w, h, 'outline') + rect(x, y + 2, end, h - 4, 'pad') + rect(x + w - end, y + 2, end, h - 4, 'pad');
    const step = (w - gap * 2) / pins;
    for (let i = 0; i < pins; i++) {
        out += rect(x + gap + i * step, y, step * 0.6, h * 0.18, 'pad') + rect(x + gap + i * step, y + h * 0.82, step * 0.6, h * 0.18, 'pad');
    }
    return out;
}

let seed = 7;
function rnd() {
    seed = (seed * 16807) % 2147483647;
    return seed / 2147483647;
}

// dense area of small passives
function field(x, y, w, h, cell, fill) {
    let out = '';
    for (let cy = y; cy <= y + h - cell * 0.6; cy += cell) {
        for (let cx = x; cx <= x + w - cell * 0.6; cx += cell) {
            if (rnd() > fill) continue;
            const wide = rnd() > 0.5;
            const a = cell - 3, b = Math.max(5, Math.round(cell * 0.55));
            out += wide ? chip(cx, cy, a, b) : chip(cx, cy, b, a);
        }
    }
    return out;
}

function dot(x, y, r) {
    const pts = [];
    for (let i = 0; i < 16; i++) {
        const q = i % 2 ? r * 0.8 : r, t = i * Math.PI / 8;
        pts.push(`${(x + q * Math.cos(t)).toFixed(1)} ${(y + q * Math.sin(t)).toFixed(1)}`);
    }
    return `<polygon class="pad" points="${pts.join(' ')}"/>`;
}

Object.entries(sections).forEach(([id, s]) => {
    let out = `<path class="shield" d="${s.shield}"/>`;
    let fine = '';
    rows(s.fields).forEach(r => fine += field(...r));
    rows(s.chips).forEach(r => fine += chip(...r));
    rows(s.ics).forEach(r => fine += ic(...r));
    rows(s.plugs).forEach(r => fine += plug(...r));
    rows(s.pads).forEach(r => fine += rect(...r, 'pad'));
    out += `<g shape-rendering="crispEdges">${fine}</g>`;
    rows(s.tilted).forEach(([x, y, w, h, a]) => out += `<g transform="rotate(${a} ${x + w / 2} ${y + h / 2})">${rect(x, y, w, h, 'pad')}</g>`);
    rows(s.dots).forEach(r => out += dot(...r));
    rows(s.drills).forEach(([x, y, r, ring]) => out += `<circle class="drill" cx="${x}" cy="${y}" r="${r}" stroke-width="${ring}"/>`);
    rows(s.refs).forEach(([x, y, t]) => out += `<text class="ref" x="${x}" y="${y}">${t}</text>`);
    document.getElementById(id).insertAdjacentHTML('beforeend', out);
});

// upright connectors and their labels
let j1 = rect(214, 306, 57, 280, 'outline');
for (let y = 332; y < 556; y += 8) {
    j1 += rect(214, y, 9, 5, 'pad') + rect(262, y, 9, 5, 'pad');
}
let j4 = rect(244, 179, 63, 94, 'outline');
for (let y = 204; y < 246; y += 10) {
    j4 += rect(246, y, 12, 5, 'pad') + rect(294, y, 12, 5, 'pad');
}
document.getElementById('b').insertAdjacentHTML('beforeend',
    `<g shape-rendering="crispEdges">${j1}</g><text class="ref" transform="translate(252 443) rotate(-90)">J1</text><text class="ref small" x="-5" y="99">1752</text><text class="ref tiny" x="72" y="98">16-01</text>`);
document.getElementById('d').insertAdjacentHTML('beforeend',
    `<g shape-rendering="crispEdges">${j4}</g><text class="ref" transform="translate(286 221) rotate(-90)">J4</text><text class="ref large" transform="translate(630 572) rotate(-90)">U8</text>`);
```
